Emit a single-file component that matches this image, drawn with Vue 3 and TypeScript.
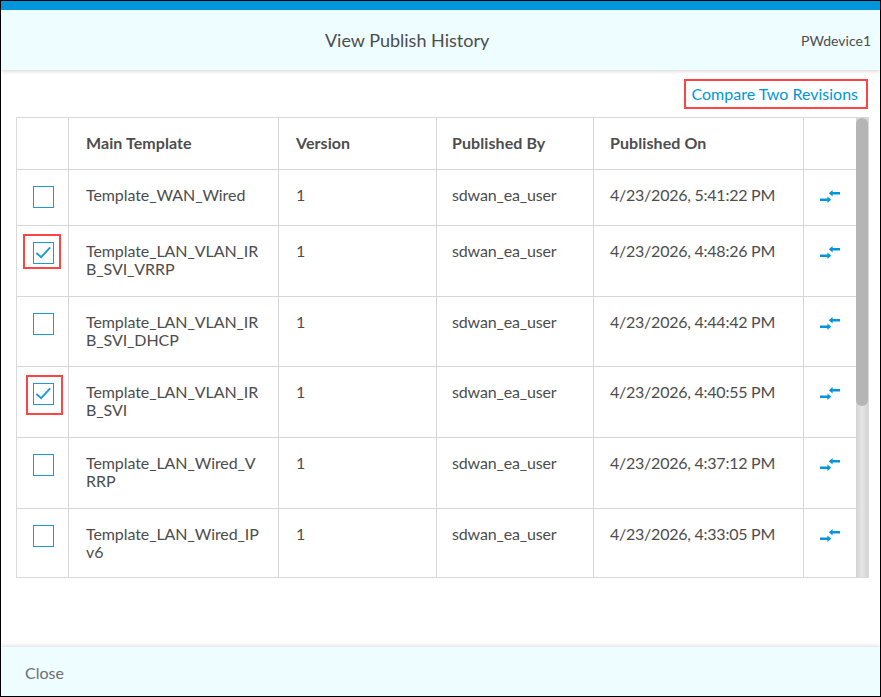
<script setup lang="ts">
interface Row { name: string; time: string; h: number; sel: boolean; mark: string }
const rows: Row[] = [
  { name: 'Template_WAN_Wired', time: '4/23/2026, 5:41:22 PM', h: 56, sel: false, mark: '' },
  { name: 'Template_LAN_VLAN_IRB_SVI_VRRP', time: '4/23/2026, 4:48:26 PM', h: 71, sel: true, mark: 'mark-a' },
  { name: 'Template_LAN_VLAN_IRB_SVI_DHCP', time: '4/23/2026, 4:44:42 PM', h: 70, sel: false, mark: '' },
  { name: 'Template_LAN_VLAN_IRB_SVI', time: '4/23/2026, 4:40:55 PM', h: 71, sel: true, mark: 'mark-b' },
  { name: 'Template_LAN_Wired_VRRP', time: '4/23/2026, 4:37:12 PM', h: 71, sel: false, mark: '' },
  { name: 'Template_LAN_Wired_IPv6', time: '4/23/2026, 4:33:05 PM', h: 69, sel: false, mark: '' },
]
</script>

<template>
  <div class="dialog">
    <header class="head">
      <h1 class="title">View Publish History</h1>
      <span class="device">PWdevice1</span>
    </header>
    <main class="body">
      <div class="actions">
        <a class="compare">Compare Two Revisions</a>
      </div>
      <div class="grid-wrap">
        <div class="grid">
          <div class="row row-head">
            <div class="cell"></div>
            <div class="cell text wide">Main Template</div>
            <div class="cell text wide">Version</div>
            <div class="cell text tight">Published By</div>
            <div class="cell text">Published On</div>
            <div class="cell"></div>
          </div>
          <div v-for="r in rows" :key="r.name" class="row" :style="{ height: r.h + 'px' }">
            <div class="cell check">
              <span class="box">
                <svg v-if="r.sel" viewBox="0 0 20 20" width="19" height="19">
                  <path d="M2.5 10.5 L7.5 15 L17 4.5" fill="none" stroke="#1b9ad8" stroke-width="2" />
                </svg>
              </span>
              <span v-if="r.mark" class="mark" :class="r.mark"></span>
            </div>
            <div class="cell text wide name">{{ r.name }}</div>
            <div class="cell text wide">1</div>
            <div class="cell text tight user">sdwan_ea_user</div>
            <div class="cell text date">{{ r.time }}</div>
            <div class="cell icon">
              <svg viewBox="0 0 20 13" width="20" height="13">
                <path d="M8.8 3.2 L12.6 0 L12.6 2 L20 2 L20 4.4 L12.6 4.4 L12.6 6.4 Z" fill="#0096dc" />
                <path d="M11.2 9.8 L7.4 6.6 L7.4 8.6 L0 8.6 L0 11 L7.4 11 L7.4 13 Z" fill="#0096dc" />
              </svg>
            </div>
          </div>
        </div>
        <div class="track"><div class="thumb"></div></div>
      </div>
    </main>
    <footer class="foot">
      <span class="close">Close</span>
    </footer>
  </div>
</template>

<style scoped>
.dialog {
  box-sizing: border-box;
  width: 881px;
  height: 697px;
  display: flex;
  flex-direction: column;
  border: 1px solid #000;
  background: #fff;
  font-family: Lato, "Liberation Sans", sans-serif;
  font-size: 16px;
  color: #4d4d4d;
}
.head {
  height: 69px;
  box-sizing: border-box;
  flex: none;
  border-top: 9px solid #0096dc;
  padding: 0 9px 0 12px;
  background: #eefdff;
  box-shadow: 0 1px 4px rgba(0, 0, 0, 0.18);
  display: flex;
  align-items: center;
}
.title {
  flex: 1;
  margin: 0;
  text-align: center;
  font-size: 18px;
  font-weight: 400;
  color: #4d4d4d;
}
.device {
  font-size: 14px;
}
.body {
  flex: 1;
  min-height: 0;
  padding: 9px 11px 0 15px;
}
.actions {
  display: flex;
  justify-content: flex-end;
  height: 38px;
  align-items: flex-start;
}
.compare {
  box-sizing: border-box;
  height: 30px;
  margin-right: 1px;
  padding: 0 8px 0 6px;
  border: 2px solid #f44;
  color: #0096dc;
  line-height: 26px;
  white-space: nowrap;
}
.grid-wrap {
  display: flex;
  height: 461px;
  width: 853px;
  box-sizing: border-box;
  border: 1px solid #d9d9d9;
  overflow: hidden;
}
.grid {
  width: 839px;
  flex: none;
}
.row {
  display: grid;
  grid-template-columns: 52px 210px 158px 157px 210px 52px;
  box-sizing: border-box;
  border-bottom: 1px solid #d6d6d6;
}
.row-head {
  height: 52px;
  font-weight: 700;
  letter-spacing: 0.08px;
}
.cell {
  box-sizing: border-box;
  border-right: 1px solid #d6d6d6;
  min-width: 0;
}
.cell:last-child {
  border-right: 0;
}
.text {
  padding: 16px 16px 0 16px;
  line-height: 18px;
  overflow-wrap: anywhere;
}
.wide {
  padding-left: 17px;
}
.tight {
  padding-left: 15px;
}
.name {
  letter-spacing: -0.08px;
}
.user {
  letter-spacing: -0.15px;
}
.date {
  letter-spacing: -0.24px;
}
.check {
  position: relative;
  padding: 16px 0 0 16px;
}
.box {
  display: block;
  box-sizing: border-box;
  width: 21px;
  height: 22px;
  border: 1.5px solid #1b9ad8;
  background: #fff;
}
.box svg {
  display: block;
}
.mark {
  position: absolute;
  box-sizing: border-box;
  border: 2px solid #f44;
}
.mark-a {
  left: 6px;
  top: 8px;
  width: 38px;
  height: 35px;
}
.mark-b {
  left: 9px;
  top: 8px;
  width: 37px;
  height: 40px;
}
.icon {
  padding: 20px 0 0 16px;
}
.icon svg {
  display: block;
}
.track {
  flex: 1;
  background: linear-gradient(90deg, #d3d3d3, #e6e6e6 50%, #d3d3d3);
}
.thumb {
  height: 288px;
  border-radius: 6px;
  background: #b5b5b5;
}
.foot {
  flex: none;
  height: 49px;
  box-sizing: border-box;
  background: #eefdff;
  box-shadow: 0 -1px 4px rgba(0, 0, 0, 0.14);
  padding: 16px 24px 0;
  color: #6f6f6f;
  line-height: 20px;
}
</style>
